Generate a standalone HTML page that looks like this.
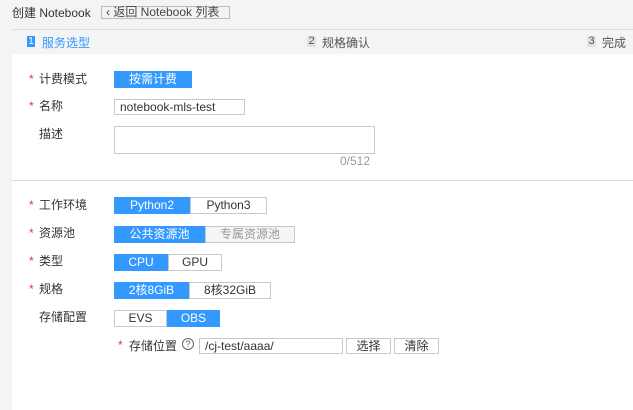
<!DOCTYPE html>
<html><head><meta charset="utf-8"><style>
*{margin:0;padding:0;box-sizing:border-box}
body{width:633px;height:410px;background:#f3f4f6;font-family:"Liberation Sans","Noto Sans CJK SC",sans-serif;font-size:12px;color:#333;position:relative;overflow:hidden}
.a{position:absolute;white-space:nowrap}
.line{position:absolute;left:12px;right:0;height:1px;background:#dcdcdc}
.white{position:absolute;left:12px;top:54px;right:0;bottom:0;background:#fff}
.lab{position:absolute;left:29px;line-height:16px}
.lab b{color:#e53935;font-weight:normal;display:inline-block;width:10px}
.seg{position:absolute;display:flex;height:17px;line-height:15px}
.seg span{border:1px solid #c8c8c8;text-align:center;color:#333}
.seg span.on{background:#3399ff;border-color:#3399ff;color:#fff}
.seg span.dis{background:#f5f5f5;color:#999}
.box{position:absolute;border:1px solid #c8c8c8;background:#fff;line-height:14px;padding-left:5px}
.btn{position:absolute;border:1px solid #c8c8c8;background:#fff;text-align:center;line-height:14px}
</style></head><body>
<div class="a" style="left:12px;top:4px;font-size:12px;color:#333">创建 Notebook</div>
<div class="a" style="left:101px;top:6px;height:13px;width:129px;border:1px solid #bbb;background:#f3f3f3;line-height:11px;padding-left:4px;color:#444">‹ 返回 Notebook 列表</div>
<div class="line" style="top:29px"></div>
<div class="a" style="left:27px;top:36px;width:8px;height:11px;background:#3399ff;color:#fff;font-size:10px;line-height:11px;text-align:center">1</div>
<div class="a" style="left:42px;top:34px;color:#3399ff">服务选型</div>
<div class="a" style="left:307px;top:36px;width:9px;height:11px;background:#e2e2e2;font-size:11px;line-height:11px;text-align:center;color:#555">2</div>
<div class="a" style="left:322px;top:34px;color:#555">规格确认</div>
<div class="a" style="left:587px;top:36px;width:9px;height:11px;background:#e2e2e2;font-size:11px;line-height:11px;text-align:center;color:#555">3</div>
<div class="a" style="left:602px;top:34px;color:#555">完成</div>
<div class="white"></div>
<div class="lab" style="top:71px"><b>*</b>计费模式</div>
<div class="seg" style="left:114px;top:71px"><span class="on" style="width:78px">按需计费</span></div>
<div class="lab" style="top:98px"><b>*</b>名称</div>
<div class="box" style="left:114px;top:99px;width:131px;height:16px;font-size:12px">notebook-mls-test</div>
<div class="lab" style="top:126px"><b></b>描述</div>
<div class="box" style="left:114px;top:126px;width:261px;height:28px"></div>
<div class="a" style="left:340px;top:154px;color:#999">0/512</div>
<div class="line" style="top:180px"></div>
<div class="lab" style="top:197px"><b>*</b>工作环境</div>
<div class="seg" style="left:114px;top:197px"><span class="on" style="width:76px">Python2</span><span style="width:77px">Python3</span></div>
<div class="lab" style="top:225px"><b>*</b>资源池</div>
<div class="seg" style="left:114px;top:226px"><span class="on" style="width:91px">公共资源池</span><span class="dis" style="width:90px">专属资源池</span></div>
<div class="lab" style="top:253px"><b>*</b>类型</div>
<div class="seg" style="left:114px;top:254px"><span class="on" style="width:54px">CPU</span><span style="width:54px">GPU</span></div>
<div class="lab" style="top:281px"><b>*</b>规格</div>
<div class="seg" style="left:114px;top:282px"><span class="on" style="width:75px">2核8GiB</span><span style="width:82px">8核32GiB</span></div>
<div class="lab" style="top:309px"><b></b>存储配置</div>
<div class="seg" style="left:114px;top:310px"><span style="width:53px">EVS</span><span class="on" style="width:53px">OBS</span></div>
<div class="a" style="left:118px;top:338px;color:#e53935">*</div>
<div class="a" style="left:129px;top:337px">存储位置</div>
<div class="a" style="left:182px;top:338px;width:12px;height:12px;border:1px solid #666;border-radius:50%;font-size:9px;line-height:10px;text-align:center;color:#555">?</div>
<div class="box" style="left:199px;top:338px;width:144px;height:16px">/cj-test/aaaa/</div>
<div class="btn" style="left:346px;top:338px;width:45px;height:16px">选择</div>
<div class="btn" style="left:394px;top:338px;width:45px;height:16px">清除</div>
</body></html>
